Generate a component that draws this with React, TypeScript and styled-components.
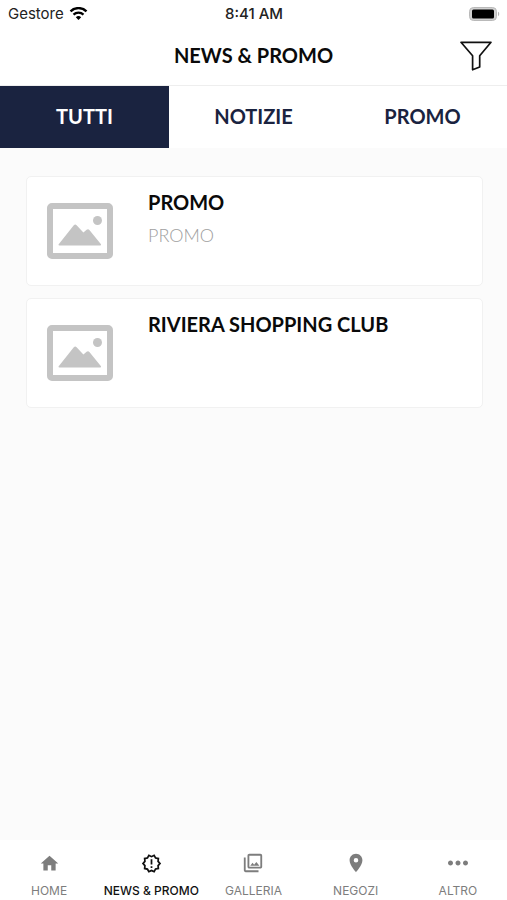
import React, { useState } from "react";
import styled, { createGlobalStyle } from "styled-components";
import {
  MdHome,
  MdLocationOn,
  MdMoreHoriz,
  MdOutlineNewReleases,
  MdOutlinePhotoLibrary,
} from "react-icons/md";

const GlobalStyle = createGlobalStyle`
  * { box-sizing: border-box; }
  body {
    margin: 0;
    background: #fbfbfb;
    font-family: Lato, "Open Sans", sans-serif;
    color: #0a0a0a;
  }
  button { font: inherit; color: inherit; border: 0; padding: 0; background: none; cursor: pointer; }
`;

const Screen = styled.div`
  min-height: 100vh;
  display: flex;
  flex-direction: column;
  overflow-x: clip;
`;

const StatusBar = styled.div`
  display: grid;
  grid-template-columns: 1fr auto 1fr;
  align-items: center;
  height: 27px;
  padding: 0 7px 0 8px;
  background: #fff;
  font-family: Inter, sans-serif;
  font-size: 15px;
  line-height: 16px;
  color: #222;
`;

const Carrier = styled.div`
  display: flex;
  align-items: center;
  gap: 5px;
`;

const Clock = styled.time`
  font-weight: 500;
`;

const Battery = styled.svg`
  justify-self: end;
`;

const Header = styled.header`
  display: grid;
  grid-template-columns: 32px 1fr 32px;
  align-items: center;
  height: 59px;
  padding: 0 15px;
  background: #fff;
  border-bottom: 1px solid #eeeeee;
`;

const Title = styled.h1`
  grid-column: 2;
  margin: 0;
  padding-bottom: 2px;
  text-align: center;
  font-size: 20px;
  line-height: 24px;
  font-weight: 700;
`;

const FilterButton = styled.button`
  display: flex;
`;

const Tabs = styled.div`
  display: grid;
  grid-template-columns: repeat(3, 1fr);
  background: #fff;
`;

const Tab = styled.button<{ $active: boolean }>`
  && {
    height: 62px;
    padding-bottom: 3px;
    font-size: 20px;
    line-height: 24px;
    font-weight: 700;
    background: ${(p) => (p.$active ? "#1a2340" : "#fff")};
    color: ${(p) => (p.$active ? "#fff" : "#1a2340")};
  }
`;

const List = styled.main`
  flex: 1;
  display: flex;
  flex-direction: column;
  gap: 12px;
  padding: 28px 24px 28px 26px;
`;

const Card = styled.article`
  display: flex;
  gap: 34px;
  height: 110px;
  padding: 13px 19px;
  background: #fff;
  border: 1px solid #f1f1f1;
  border-radius: 5px;
`;

const Placeholder = styled.svg`
  flex: none;
  align-self: center;
`;

const CardTitle = styled.h2`
  margin: 0;
  font-size: 20px;
  line-height: 24px;
  font-weight: 700;
`;

const CardText = styled.p`
  margin: 10px 0 0;
  font-size: 18px;
  line-height: 22px;
  font-weight: 300;
  color: #a0a0a0;
`;

const NavBar = styled.nav`
  display: grid;
  grid-template-columns: repeat(5, 1fr);
  height: 60px;
  margin: 0 -2px;
  background: #fff;
`;

const NavItem = styled.button<{ $active: boolean }>`
  && {
    display: flex;
    flex-direction: column;
    align-items: center;
    justify-content: flex-end;
    gap: 9px;
    padding-bottom: 1px;
    font-family: Inter, sans-serif;
    font-size: 12px;
    line-height: 16px;
    font-weight: ${(p) => (p.$active ? 500 : 400)};
    white-space: nowrap;
    color: ${(p) => (p.$active ? "#111" : "#7d7d7d")};
  }
`;

const NavIcon = styled.span`
  display: flex;
  align-items: center;
  justify-content: center;
  height: 22px;
`;

function WifiIcon() {
  return (
    <svg width="19" height="14" viewBox="0 0 18 14" aria-hidden="true">
      <path d="M1 4.3a11.6 11.6 0 0 1 16 0" fill="none" stroke="#000" strokeWidth="2.4" />
      <path d="M4 7.6a7.3 7.3 0 0 1 10 0" fill="none" stroke="#000" strokeWidth="2.2" />
      <path d="M6.3 10.2a4 4 0 0 1 5.4 0L9 13.1z" fill="#000" />
    </svg>
  );
}

function BatteryIcon() {
  return (
    <Battery width="31" height="14" viewBox="0 0 31 14" role="img" aria-label="Battery full">
      <rect x="0.5" y="0.5" width="27" height="13" rx="4" fill="#d0d0d0" stroke="#b9b9b9" />
      <path d="M29 4.8c1.6.6 1.6 3.8 0 4.4z" fill="#b5b5b5" />
      <rect x="3" y="2.5" width="22" height="9" rx="1.5" fill="#000" />
    </Battery>
  );
}

function FilterIcon() {
  return (
    <svg width="32" height="30" viewBox="0 0 32 30" fill="none" stroke="#111" strokeWidth="1.7" strokeLinejoin="round" aria-hidden="true">
      <path d="M1 1.3H31L19.7 14.8V26L12.6 28.8V14.8Z" />
    </svg>
  );
}

function PicturePlaceholder() {
  return (
    <Placeholder width="68" height="58" viewBox="0 0 68 58" aria-hidden="true">
      <rect x="4" y="4" width="60" height="50" rx="2" fill="none" stroke="#c4c4c4" strokeWidth="6" />
      <circle cx="51.5" cy="18.5" r="4.5" fill="#c4c4c4" />
      <path d="M12.5 42.5 27.8 23.2q1.4-1.5 2.8 0l6.8 7.4 3.2-2.8q1.6-1.2 3 .4L55 42.2q.4 1.3-1 1.3H13.5q-1.2 0-1-1Z" fill="#c4c4c4" />
    </Placeholder>
  );
}

const tabs = ["TUTTI", "NOTIZIE", "PROMO"];

const items = [
  { title: "PROMO", text: "PROMO" },
  { title: "RIVIERA SHOPPING CLUB" },
];

const sections = [
  { label: "HOME", Icon: MdHome, size: 21 },
  { label: "NEWS & PROMO", Icon: MdOutlineNewReleases, size: 21 },
  { label: "GALLERIA", Icon: MdOutlinePhotoLibrary, size: 22 },
  { label: "NEGOZI", Icon: MdLocationOn, size: 22 },
  { label: "ALTRO", Icon: MdMoreHoriz, size: 30 },
];

export default function App() {
  const [tab, setTab] = useState("TUTTI");
  const [section, setSection] = useState("NEWS & PROMO");

  return (
    <Screen>
      <GlobalStyle />
      <StatusBar>
        <Carrier>
          Gestore <WifiIcon />
        </Carrier>
        <Clock>8:41 AM</Clock>
        <BatteryIcon />
      </StatusBar>
      <Header>
        <Title>NEWS &amp; PROMO</Title>
        <FilterButton type="button" aria-label="Filtra">
          <FilterIcon />
        </FilterButton>
      </Header>
      <Tabs role="tablist">
        {tabs.map((name) => (
          <Tab
            key={name}
            type="button"
            role="tab"
            aria-selected={tab === name}
            $active={tab === name}
            onClick={() => setTab(name)}
          >
            {name}
          </Tab>
        ))}
      </Tabs>
      <List>
        {items.map((item) => (
          <Card key={item.title}>
            <PicturePlaceholder />
            <div>
              <CardTitle>{item.title}</CardTitle>
              {item.text && <CardText>{item.text}</CardText>}
            </div>
          </Card>
        ))}
      </List>
      <NavBar>
        {sections.map(({ label, Icon, size }) => (
          <NavItem
            key={label}
            type="button"
            aria-current={section === label ? "page" : undefined}
            $active={section === label}
            onClick={() => setSection(label)}
          >
            <NavIcon>
              <Icon size={size} aria-hidden="true" />
            </NavIcon>
            {label}
          </NavItem>
        ))}
      </NavBar>
    </Screen>
  );
}
